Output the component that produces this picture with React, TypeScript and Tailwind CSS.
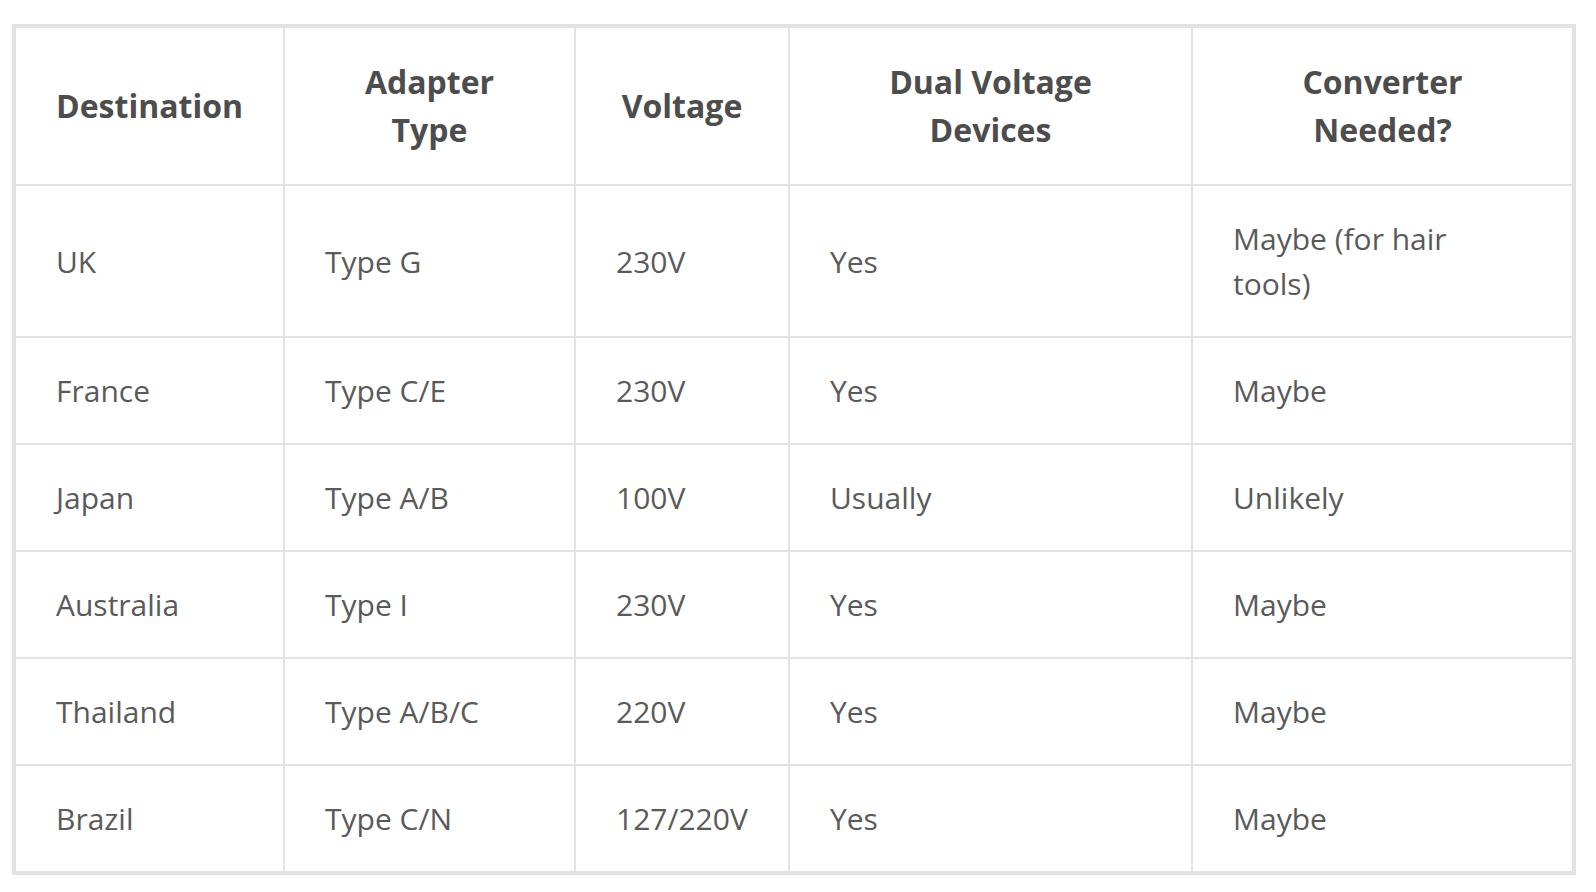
import React from "react";

const headers: string[][] = [
  ["Destination"],
  ["Adapter", "Type"],
  ["Voltage"],
  ["Dual Voltage", "Devices"],
  ["Converter", "Needed?"],
];

const rows: string[][] = [
  ["UK", "Type G", "230V", "Yes", "Maybe (for hair tools)"],
  ["France", "Type C/E", "230V", "Yes", "Maybe"],
  ["Japan", "Type A/B", "100V", "Usually", "Unlikely"],
  ["Australia", "Type I", "230V", "Yes", "Maybe"],
  ["Thailand", "Type A/B/C", "220V", "Yes", "Maybe"],
  ["Brazil", "Type C/N", "127/220V", "Yes", "Maybe"],
];

const widths = ["w-[269px]", "w-[291px]", "w-[214px]", "w-[403px]", "w-[381px]"];

export default function App() {
  return (
    <div
      className="min-h-[892px] bg-white pl-[12px] pt-[24px]"
      style={{ fontFamily: '"Open Sans", "Noto Sans", sans-serif' }}
    >
      <div className="w-[1564px] border-2 border-[#e3e3e3]">
        <table className="w-full table-fixed border-collapse">
          <colgroup>
            {widths.map((w, i) => (
              <col key={i} className={w} />
            ))}
          </colgroup>
          <thead>
            <tr>
              {headers.map((h, i) => (
                <th
                  key={i}
                  className="h-[158px] border-2 border-[#e3e3e3] px-[20px] py-0 text-center align-middle text-[32px] font-bold leading-[48px] text-[#4d4d4d]"
                >
                  {h.map((line, j) => (
                    <div key={j}>{line}</div>
                  ))}
                </th>
              ))}
            </tr>
          </thead>
          <tbody>
            {rows.map((r, i) => (
              <tr key={i}>
                {r.map((c, j) => (
                  <td
                    key={j}
                    className="border-2 border-[#e3e3e3] pl-[40px] pr-[48px] py-[30px] text-left align-middle text-[30px] font-normal leading-[45px] text-[#5a5a5a]"
                  >
                    {c}
                  </td>
                ))}
              </tr>
            ))}
          </tbody>
        </table>
      </div>
    </div>
  );
}
